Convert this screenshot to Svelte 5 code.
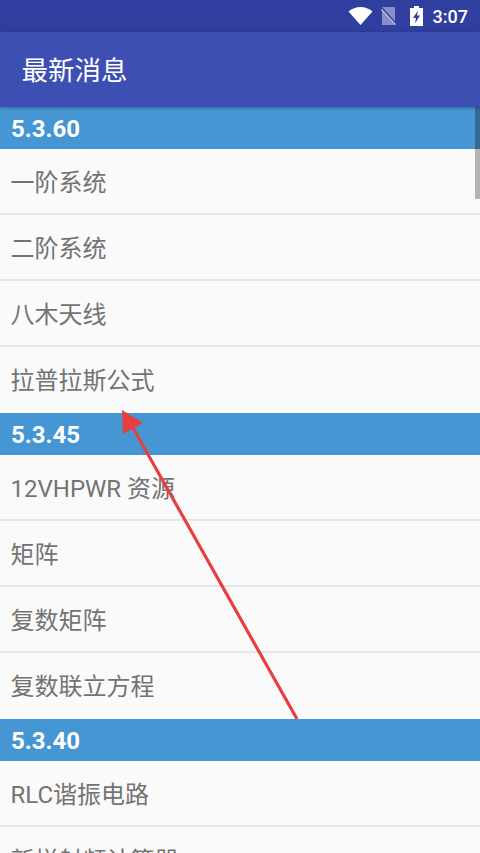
<script>
  const sections = [
    { v: '5.3.60', items: ['一阶系统', '二阶系统', '八木天线', '拉普拉斯公式'] },
    { v: '5.3.45', items: ['12VHPWR 资源', '矩阵', '复数矩阵', '复数联立方程'] },
    { v: '5.3.40', items: ['RLC谐振电路', '新样射频计算器'] }
  ];
</script>

<div class="screen">
  <div class="status">
    <svg class="wifi" width="25" height="18" viewBox="0 0 25 18"><path d="M0.500 4.500C4 1.600 8 0 12.500 0s8.500 1.600 12 4.500L12.500 18z" fill="#fff"/></svg>
    <svg class="sim" width="17" height="18" viewBox="0 0 17 18"><path d="M2 0h13v18H2z" fill="#fff" opacity=".42"/><path d="M2 1L16 16.500" stroke="#303f9f" stroke-width="1.500"/><path d="M1 2L16 18" stroke="#fff" stroke-width="1.200" opacity=".45"/></svg>
    <svg class="bat" width="13" height="20" viewBox="0 0 13 20"><path d="M4 0h5v2h4v18H0V2h4z" fill="#fff"/><path d="M8 4.500L3 12h3L5 17.500l5-8H7z" fill="#303f9f"/></svg>
    <span class="time">3:07</span>
  </div>
  <div class="bar">最新消息</div>
  <div class="list">
    {#each sections as s}
      <div class="head">{s.v}</div>
      {#each s.items as it}
        <div class="row">{it}</div>
      {/each}
    {/each}
  </div>
  <div class="thumb"></div>
  <svg class="arrow" width="480" height="853" viewBox="0 0 480 853">
    <line x1="297" y1="719" x2="132" y2="426" stroke="#e5403f" stroke-width="3.2"/>
    <polygon points="122,410 143,423 123,434" fill="#e5403f"/>
  </svg>
</div>

<style>
  :global(body) { margin: 0; }
  .screen {
    position: relative;
    width: 480px;
    height: 853px;
    overflow: hidden;
    background: #fafafa;
    font-family: Roboto, "Noto Sans CJK SC", sans-serif;
  }
  .status {
    height: 32px;
    background: #303f9f;
    display: flex;
    align-items: center;
    justify-content: flex-end;
    padding-right: 12px;
    box-sizing: border-box;
    color: #fff;
  }
  .wifi { margin-right: 7px; }
  .sim { margin-right: 13px; }
  .bat { margin-right: 10px; }
  .time { font-size: 18px; font-weight: 500; }
  .bar {
    height: 75px;
    box-sizing: border-box;
    background: #3d4fb3;
    color: #fff;
    font-size: 26.500px;
    line-height: 75px;
    padding: 1px 0 0 21.500px;
    box-shadow: 0 1px 3px rgba(0,0,0,.3);
    position: relative;
  }
  .head {
    height: 42px;
    box-sizing: border-box;
    background: #4596d3;
    color: #fff;
    font-size: 24px;
    font-weight: 700;
    line-height: 42px;
    padding: 1px 0 0 11px;
  }
  .row {
    height: 66px;
    box-sizing: border-box;
    border-bottom: 2px solid #e6e6e6;
    color: #737373;
    font-size: 24px;
    line-height: 66px;
    padding: 1px 0 0 10.500px;
    white-space: nowrap;
  }
  .row:nth-of-type(5n) { border-bottom: none; }
  .thumb {
    position: absolute;
    right: 0;
    top: 107px;
    width: 5px;
    height: 92px;
    background: rgba(0,0,0,.28);
  }
  .arrow { position: absolute; left: 0; top: 0; pointer-events: none; }
</style>
